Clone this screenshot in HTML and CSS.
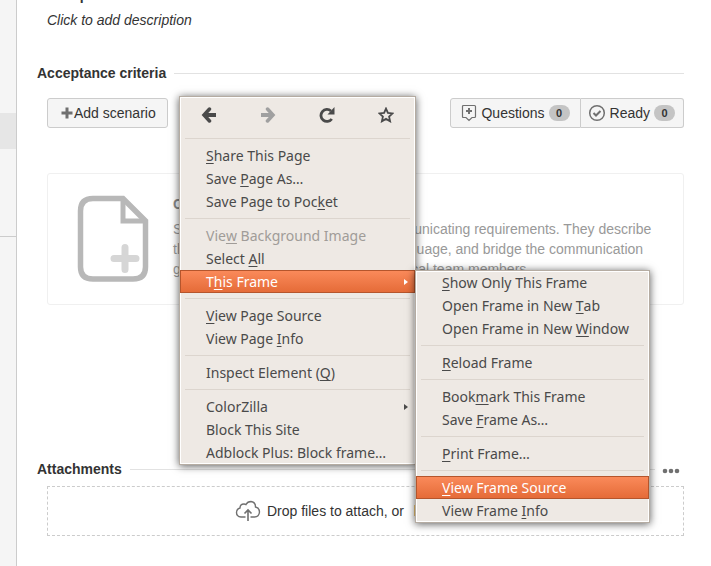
FILE: index.html
```html
<!DOCTYPE html>
<html lang="en">
<head>
<meta charset="utf-8">
<title>Acceptance criteria</title>
<link rel="stylesheet" href="styles.css">
</head>
<body>
<aside class="rail"><div class="rail-top"></div><div class="rail-active"></div><div class="rail-mid"></div></aside>
<main class="page">
  <h2 class="title">Description</h2>
  <p class="description">Click to add description</p>

  <h2 class="section-head">Acceptance criteria</h2>
  <div class="toolbar">
    <button class="btn" type="button">
      <svg width="12" height="12" viewBox="0 0 12 12"><path d="M6 .5v11M.5 6h11" stroke="#707070" stroke-width="3"/></svg>Add scenario
    </button>
    <div class="group">
      <button class="btn" type="button">
        <svg class="lead" width="16" height="18" viewBox="0 0 16 18" fill="none" stroke="#707070"><path d="M2.500 1.500h11q1 0 1 1v10q0 1-1 1h-2.500l-3 3-3-3h-2.500q-1 0-1-1v-10q0-1 1-1z" stroke-width="1.200"/><path d="M8 4v6M5 7h6" stroke-width="2"/></svg>
        Questions <span class="badge">0</span>
      </button>
      <button class="btn" type="button">
        <svg class="lead" width="18" height="18" viewBox="0 0 18 18" fill="none" stroke="#707070"><circle cx="9" cy="9" r="7.300" stroke-width="1.500"/><path d="M5.500 9l2.500 2.500 4.500-4.500" stroke-width="2"/></svg>
        Ready <span class="badge">0</span>
      </button>
    </div>
  </div>

  <section class="hint">
    <svg class="hint-icon" width="72" height="88" viewBox="0 0 72 88" fill="none">
      <path d="M46 3.500H16Q3.500 3.500 3.500 16V72Q3.500 84 16 84H56Q68.500 84 68.500 72V26Z" stroke="#b8b8b8" stroke-width="5.500"/>
      <path d="M46 4V26H68" stroke="#b8b8b8" stroke-width="5"/>
      <path d="M48 52.500V74.500M37 63.500H59" stroke="#d6d6d6" stroke-width="7" stroke-linecap="round"/>
    </svg>
    <div>
      <h3 class="hint-title">Create scenarios</h3>
      <p class="hint-text">Scenarios are a powerful way of communicating requirements. They describe<br>the intended behaviour in a simple language, and bridge the communication<br>gaps between the business and technical team members.</p>
    </div>
  </section>

  <div class="attach-row">
    <h2 class="section-head">Attachments</h2>
    <button class="more" type="button" aria-label="More"><svg width="18" height="6" viewBox="0 0 18 6" fill="#707070"><circle cx="3" cy="3" r="2.300"/><circle cx="9" cy="3" r="2.300"/><circle cx="15" cy="3" r="2.300"/></svg></button>
  </div>
  <div class="drop">
    <svg width="26" height="22" viewBox="0 0 26 22" fill="none" stroke="#707070" stroke-width="1.400"><path d="M10.500 17H6Q1.500 16.500 1.500 12.500Q1.500 9 5 8Q5 4 9 4Q10 4 11 4.500Q12.500 1.500 16 1.500Q20.500 2 20.500 7Q24.500 8 24.500 12Q24 17 19.500 17H15.500"/><path d="M13 21V11M9.500 13.500L13 10l3.500 3.500" stroke-width="1.600"/></svg>
    <span>Drop files to attach, or <a href="#">browse.</a></span>
  </div>
</main>

<div class="menu context" role="menu">
  <div class="nav">
    <button type="button" aria-label="Back"><svg width="16" height="16" viewBox="0 0 16 16" fill="none" stroke="#4a4a4a"><path d="M8.500 2L3 8l5.500 6" stroke-width="3.500" stroke-linecap="round"/><path d="M3 8h12" stroke-width="4"/></svg></button>
    <button type="button" aria-label="Forward" disabled><svg width="16" height="16" viewBox="0 0 16 16" fill="none" stroke="#a0a0a0"><path d="M7.500 2L13 8l-5.500 6" stroke-width="3.500" stroke-linecap="round"/><path d="M13 8H1" stroke-width="4"/></svg></button>
    <button type="button" aria-label="Reload"><svg width="16" height="16" viewBox="0 0 16 16"><path d="M12 4A6 6 0 1 0 12.800 12" fill="none" stroke="#4a4a4a" stroke-width="2.800"/><path d="M15.500 0V7.500H8.500Z" fill="#4a4a4a"/></svg></button>
    <button type="button" aria-label="Bookmark"><svg width="16" height="16" viewBox="0 0 16 16"><path d="M8 1.600l1.900 4.300 4.700.5-3.500 3.200 1 4.700L8 11.900l-4.100 2.400 1-4.700L1.400 6.400l4.700-.5z" fill="none" stroke="#4a4a4a" stroke-width="1.800"/></svg></button>
  </div>
  <hr>
  <button class="item" type="button"><u>S</u>hare This Page</button>
  <button class="item" type="button">Save <u>P</u>age As…</button>
  <button class="item" type="button">Save Page to Poc<u>k</u>et</button>
  <hr>
  <button class="item" type="button" disabled>Vie<u>w</u> Background Image</button>
  <button class="item" type="button">Select <u>A</u>ll</button>
  <div class="parent">
    <button class="item selected" type="button">T<u>h</u>is Frame<span class="arrow"></span></button>
    <div class="menu submenu" role="menu">
      <button class="item" type="button"><u>S</u>how Only This Frame</button>
      <button class="item" type="button">Open Frame in New <u>T</u>ab</button>
      <button class="item" type="button">Open Frame in New <u>W</u>indow</button>
      <hr>
      <button class="item" type="button"><u>R</u>eload Frame</button>
      <hr>
      <button class="item" type="button">Book<u>m</u>ark This Frame</button>
      <button class="item" type="button">Save <u>F</u>rame As…</button>
      <hr>
      <button class="item" type="button"><u>P</u>rint Frame…</button>
      <hr>
      <button class="item selected" type="button"><u>V</u>iew Frame Source</button>
      <button class="item" type="button">View Frame <u>I</u>nfo</button>
    </div>
  </div>
  <hr>
  <button class="item" type="button"><u>V</u>iew Page Source</button>
  <button class="item" type="button">View Page <u>I</u>nfo</button>
  <hr>
  <button class="item" type="button">Inspect Element (<u>Q</u>)</button>
  <hr>
  <button class="item" type="button">ColorZilla<span class="arrow"></span></button>
  <button class="item" type="button">Block This Site</button>
  <button class="item" type="button">Adblock Plus: Block frame…</button>
</div>
</body>
</html>
```
FILE: styles.css
```css
* { box-sizing: border-box; }
body {
  margin: 0;
  min-height: 100vh;
  display: flex;
  overflow: hidden;
  background: #fff;
  color: #333;
  font: 14px/20px "Liberation Sans", Arial, sans-serif;
}
h2, h3, p { margin: 0; font-size: 14px; line-height: 20px; }
button { font: inherit; color: inherit; margin: 0; }
svg { flex: none; display: block; }

.rail { flex: none; width: 17px; background: #f5f5f5; border-right: 1px solid #ccc; }
.rail-top { height: 113px; }
.rail-active { height: 36px; background: #e6e6e6; }
.rail-mid { height: 88px; border-bottom: 1px solid #ccc; }

.page { flex: 1; min-width: 0; padding: 0 27px 0 20px; }
.title { margin-top: -15px; }
.description { margin: 5px 0 0 10px; font-style: italic; }
.section-head { flex: 1; display: flex; align-items: center; gap: 8px; }
.section-head::after { content: ""; flex: 1; height: 1px; background: #e2e2e2; }
.description + .section-head { margin-top: 33px; }

.toolbar { display: flex; justify-content: space-between; margin: 15px 0 0 10px; }
.btn {
  display: flex;
  align-items: center;
  gap: 1px;
  height: 30px;
  padding: 0 11px 0 13px;
  background: #f5f5f5;
  border: 1px solid #ccc;
  border-radius: 3px;
  white-space: nowrap;
}
.group { display: flex; }
.group .btn { gap: 0; padding: 0 10px; }
.group .btn:first-child { border-radius: 3px 0 0 3px; }
.group .btn:last-child { border-left: 0; border-radius: 0 3px 3px 0; padding: 0 8px 0 7px; }
.lead { margin-right: 4px; }
.badge {
  margin-left: 4px;
  width: 21px;
  border-radius: 8px;
  background: #c4c4c4;
  font: bold 11px/16px "Liberation Sans", Arial, sans-serif;
  text-align: center;
}

.hint {
  display: flex;
  gap: 24px;
  height: 132px;
  margin: 45px 0 0 10px;
  padding: 20px 0 0 29px;
  border: 1px solid #f0f0f0;
  border-radius: 3px;
  overflow: hidden;
  white-space: nowrap;
}
.hint-icon { margin-top: 1px; }
.hint-title { color: #888; }
.hint-text { margin-top: 5px; color: #999; }

.attach-row { display: flex; align-items: center; margin-top: 154px; }
.attach-row .section-head { margin-right: 7px; }
.more { width: 18px; height: 20px; padding: 4px 0 0; border: 0; background: none; margin-right: 4px; }
.drop {
  display: flex;
  align-items: center;
  gap: 6px;
  height: 50px;
  margin: 7px 0 0 10px;
  padding-left: 187px;
  border: 1px dashed #ccc;
}
.drop a { margin-left: 6px; color: #b56d3a; text-decoration: none; }

.menu {
  position: absolute;
  border: 1px solid #b5aca2;
  background: #eee9e4;
  box-shadow: inset 0 0 0 1px #fff, 0 1px 8px rgba(0, 0, 0, .65);
  color: #4a4a4a;
  font: 14px/21px "Noto Sans", Ubuntu, sans-serif;
}
.context { left: 179px; top: 96px; width: 237px; }
.submenu { left: 100%; top: 0; width: 235px; }
.parent { position: relative; }
.nav { display: flex; height: 36px; }
.nav button { flex: 1; display: flex; align-items: center; justify-content: center; padding: 0; border: 0; background: none; }
.menu hr { height: 1px; margin: 5px; border: 0; background: #dcd5ce; }
.item {
  display: flex;
  align-items: center;
  width: 100%;
  height: 23px;
  padding: 0 6px 0 25px;
  border: 1px solid transparent;
  background: none;
  white-space: pre;
}
.item:disabled { color: #a09c98; }
.item u { text-underline-offset: 2px; }
.selected { border-color: #b5552c; background: linear-gradient(#fa8a5a, #e56b38); color: #fff; }
.arrow {
  margin-left: auto;
  border-left: 4px solid currentColor;
  border-top: 3px solid transparent;
  border-bottom: 3px solid transparent;
}
```
